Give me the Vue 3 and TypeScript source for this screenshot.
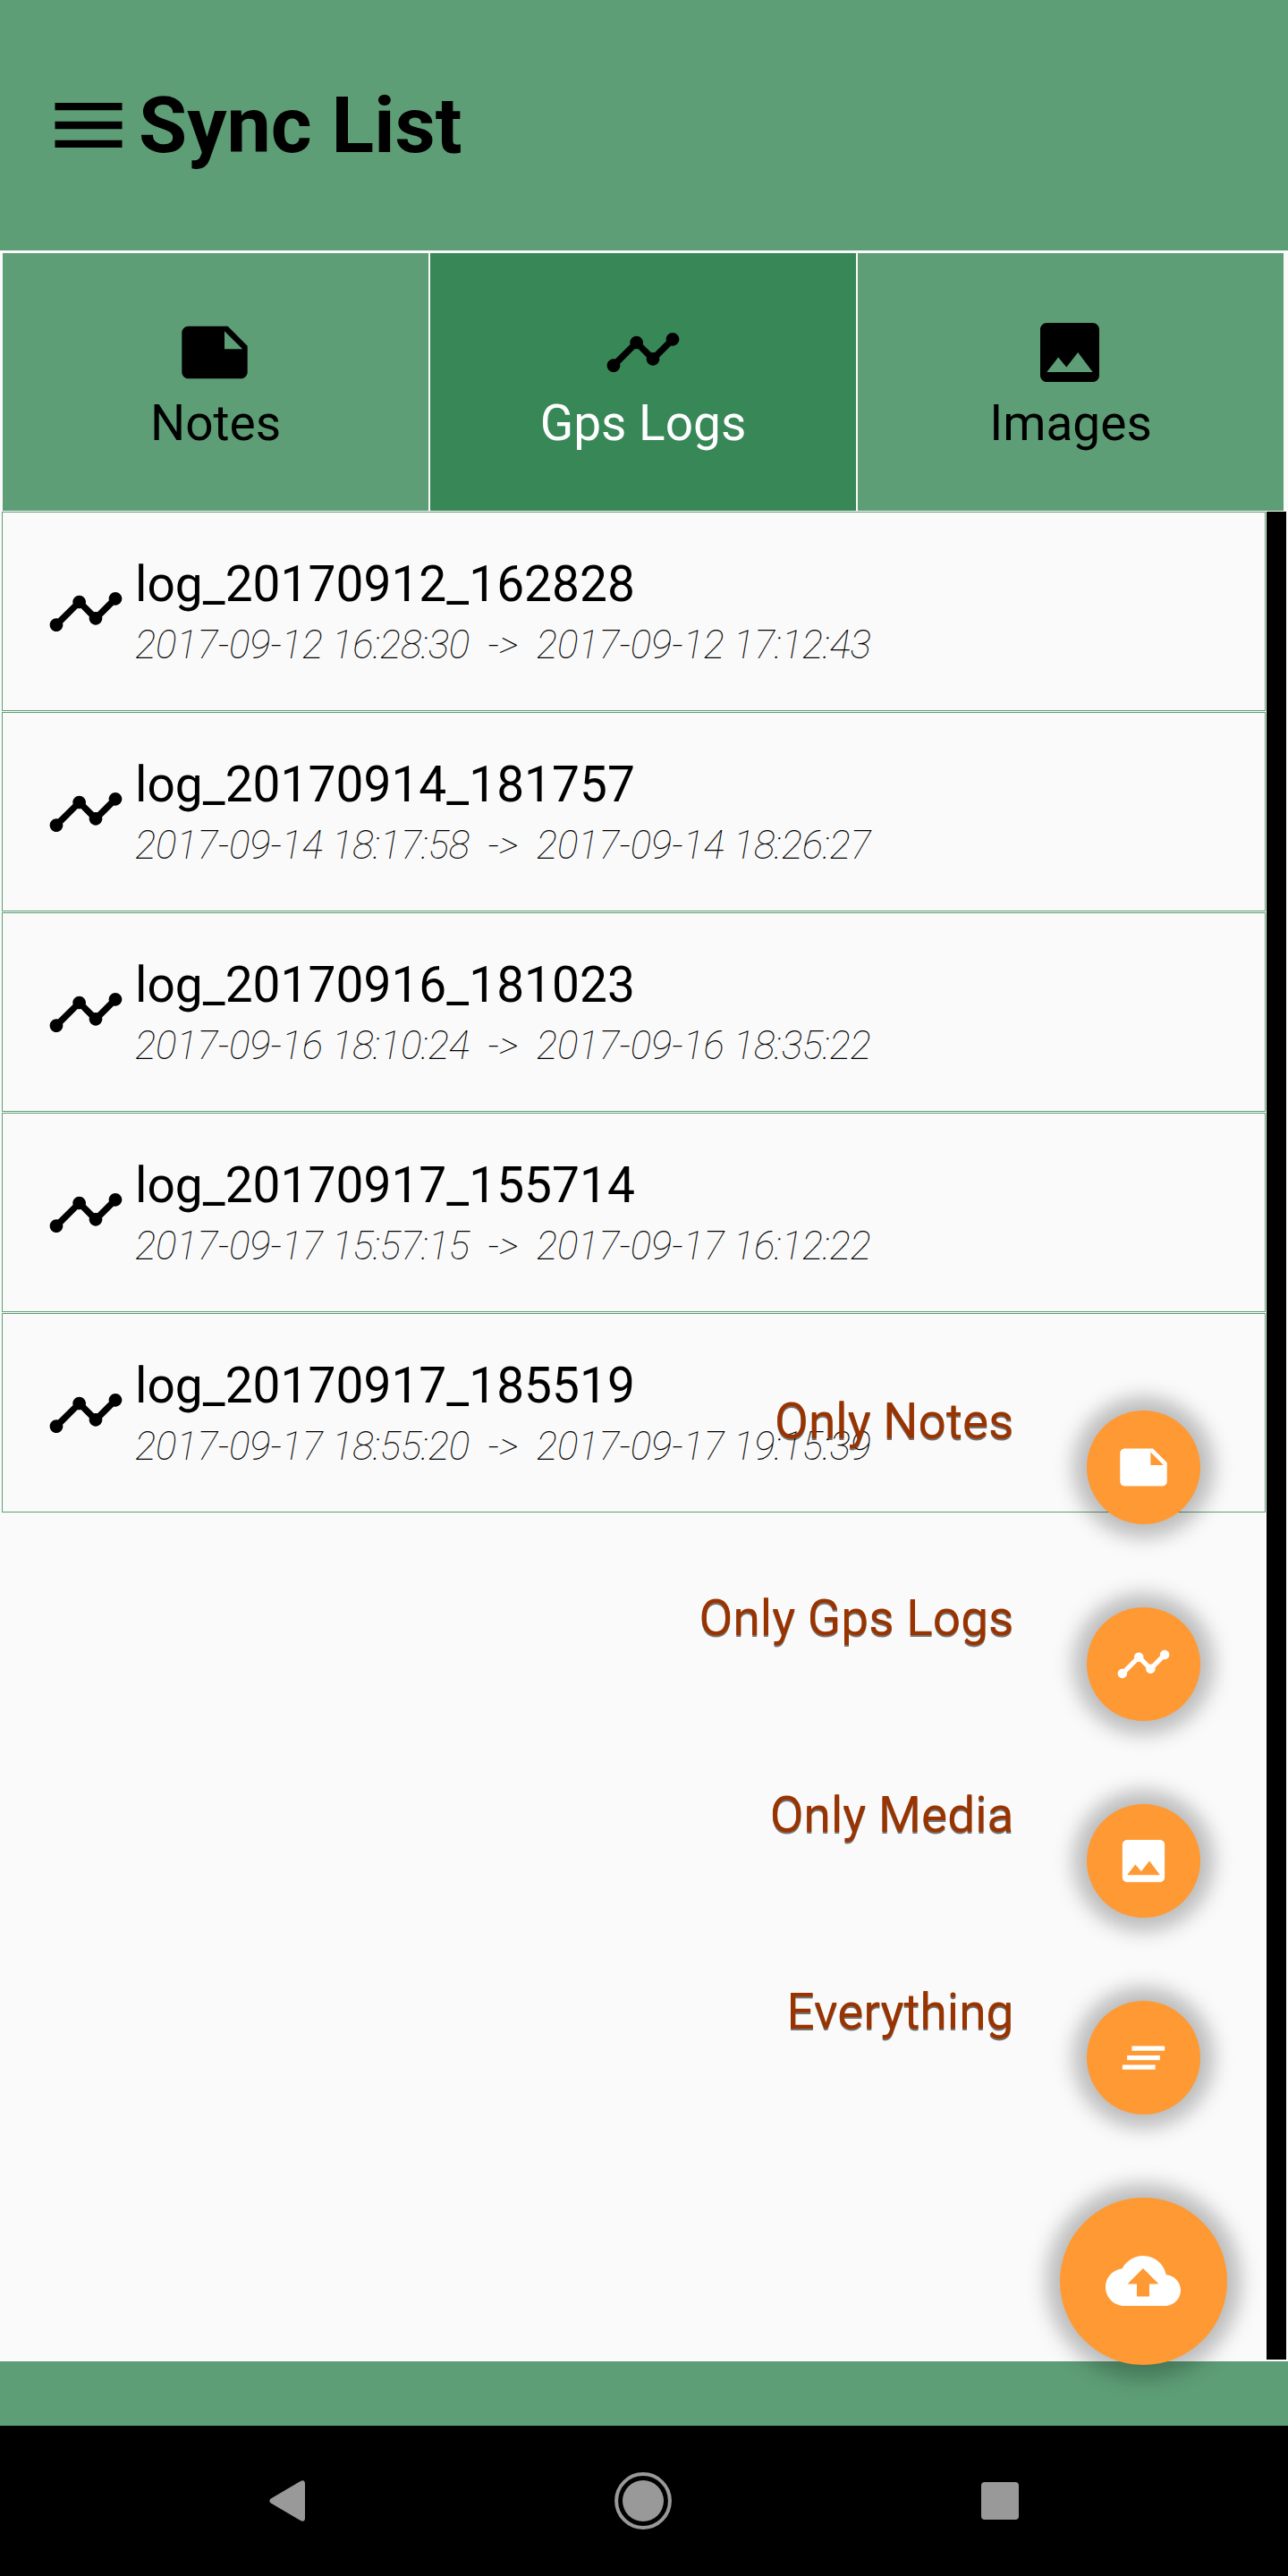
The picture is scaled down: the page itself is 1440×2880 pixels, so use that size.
<script setup lang="ts">
interface Tab {
  label: string
  icon: string
  active: boolean
}

interface LogEntry {
  name: string
  start: string
  end: string
}

interface SyncAction {
  label: string
  icon: string
}

const icons: Record<string, string> = {
  menu: 'M3 18h18v-2H3v2zm0-5h18v-2H3v2zm0-7v2h18V6H3z',
  note: 'M22 10l-6-6H4c-1.1 0-2 .9-2 2v12.01c0 1.1.9 1.99 2 1.99l16-.01c1.1 0 2-.89 2-1.99v-8zm-7-4.5l5.5 5.5H15V5.500z',
  timeline:
    'M23 8c0 1.1-.9 2-2 2-.18 0-.35-.02-.51-.07l-3.56 3.55c.05.16.07.34.07.52 0 1.1-.9 2-2 2s-2-.9-2-2c0-.18.02-.36.07-.52l-2.55-2.55c-.16.05-.34.07-.52.07s-.36-.02-.52-.07l-4.55 4.56c.05.16.07.33.07.51 0 1.1-.9 2-2 2s-2-.9-2-2 .9-2 2-2c.18 0 .35.02.51.07l4.56-4.55C8.02 9.36 8 9.18 8 9c0-1.1.9-2 2-2s2 .9 2 2c0 .18-.02.36-.07.52l2.55 2.55c.16-.05.34-.07.52-.07s.36.02.52.07l3.55-3.56C19.02 8.35 19 8.18 19 8c0-1.100.9-2 2-2s2 .9 2 2z',
  image:
    'M21 19V5c0-1.1-.9-2-2-2H5c-1.1 0-2 .9-2 2v14c0 1.1.9 2 2 2h14c1.1 0 2-.9 2-2zM8.5 13.5l2.5 3.01L14.5 12l4.5 6H5l3.5-4.5z',
  clearAll: 'M5 13h14v-2H5v2zm-2 4h14v-2H3v2zM7 7v2h14V7H7z',
  cloudUpload:
    'M19.35 10.04C18.67 6.59 15.64 4 12 4 9.11 4 6.6 5.64 5.35 8.04 2.34 8.36 0 10.91 0 14c0 3.31 2.69 6 6 6h13c2.76 0 5-2.24 5-5 0-2.64-2.05-4.78-4.65-4.96zM14 13v4h-4v-4H7l5-5 5 5h-3z',
}

const tabs: Tab[] = [
  { label: 'Notes', icon: icons.note, active: false },
  { label: 'Gps Logs', icon: icons.timeline, active: true },
  { label: 'Images', icon: icons.image, active: false },
]

const logs: LogEntry[] = [
  { name: 'log_20170912_162828', start: '2017-09-12 16:28:30', end: '2017-09-12 17:12:43' },
  { name: 'log_20170914_181757', start: '2017-09-14 18:17:58', end: '2017-09-14 18:26:27' },
  { name: 'log_20170916_181023', start: '2017-09-16 18:10:24', end: '2017-09-16 18:35:22' },
  { name: 'log_20170917_155714', start: '2017-09-17 15:57:15', end: '2017-09-17 16:12:22' },
  { name: 'log_20170917_185519', start: '2017-09-17 18:55:20', end: '2017-09-17 19:15:39' },
]

const actions: SyncAction[] = [
  { label: 'Only Notes', icon: icons.note },
  { label: 'Only Gps Logs', icon: icons.timeline },
  { label: 'Only Media', icon: icons.image },
  { label: 'Everything', icon: icons.clearAll },
]
</script>

<template>
  <div class="screen">
    <header class="app-bar">
      <svg class="menu-icon" viewBox="0 0 24 24"><path :d="icons.menu" /></svg>
      <h1 class="title">Sync List</h1>
    </header>

    <nav class="tabs">
      <div v-for="tab in tabs" :key="tab.label" class="tab" :class="{ active: tab.active }">
        <svg class="icon" viewBox="0 0 24 24"><path :d="tab.icon" /></svg>
        <span class="tab-label">{{ tab.label }}</span>
      </div>
    </nav>

    <main class="content">
      <ul class="logs">
        <li v-for="log in logs" :key="log.name" class="log">
          <svg class="icon" viewBox="0 0 24 24"><path :d="icons.timeline" /></svg>
          <div class="log-text">
            <span class="log-name">{{ log.name }}</span>
            <span class="log-range">{{ `${log.start}  ->  ${log.end}` }}</span>
          </div>
        </li>
      </ul>
      <div class="scrollbar"></div>
    </main>

    <div class="bottom-bar"></div>

    <footer class="system-nav">
      <svg class="back" viewBox="0 0 40 46">
        <path d="M34.500 1.200Q40 -1.800 40 4V42Q40 47.800 34.500 44.800L1.800 25.600Q-1.200 23 1.800 20.400Z" />
      </svg>
      <svg class="home" viewBox="0 0 64 64">
        <circle cx="32" cy="32" r="29.900" fill="none" stroke="#999" stroke-width="4" />
        <circle cx="32" cy="32" r="23" />
      </svg>
      <div class="recents"></div>
    </footer>

    <div class="speed-dial">
      <div v-for="action in actions" :key="action.label" class="action">
        <span class="action-label">{{ action.label }}</span>
        <button class="fab mini">
          <svg viewBox="0 0 24 24"><path :d="action.icon" /></svg>
        </button>
      </div>
      <button class="fab main">
        <svg viewBox="0 0 24 24"><path :d="icons.cloudUpload" /></svg>
      </button>
    </div>
  </div>
</template>

<style>
body {
  margin: 0;
}
</style>

<style scoped>
.screen {
  position: relative;
  display: flex;
  flex-direction: column;
  width: 1440px;
  height: 2880px;
  overflow: hidden;
  background: #fafafa;
  color: #000;
  font-family: Roboto, 'Liberation Sans', sans-serif;
}

svg {
  display: block;
  flex: none;
}

.app-bar {
  display: flex;
  align-items: center;
  box-sizing: border-box;
  height: 280px;
  padding-left: 49px;
  background: #5d9e76;
}

.menu-icon {
  width: 100px;
  height: 100px;
  margin-top: -1px;
}

.title {
  margin: 0 0 0 6px;
  font-size: 88px;
  line-height: 104px;
  font-weight: 700;
}

.tabs {
  display: flex;
  gap: 2px;
  height: 288px;
  padding: 3px 5px 1px 3px;
}

.tab {
  display: flex;
  flex: 1;
  flex-direction: column;
  align-items: center;
  box-sizing: border-box;
  padding-top: 67px;
  background: #5d9e76;
}

.tab.active {
  background: #388757;
  color: #fff;
}

.icon {
  width: 88px;
  height: 88px;
  fill: #000;
}

.tab:not(.active) .icon {
  margin-right: 2px;
}

.tab-label {
  font-size: 55px;
  line-height: 70px;
}

.content {
  display: flex;
  height: 2068px;
}

.logs {
  display: flex;
  flex-direction: column;
  gap: 1px;
  width: 1413px;
  margin: 0 1px 0 2px;
  padding: 0;
  list-style: none;
}

.log {
  display: flex;
  align-items: flex-start;
  box-sizing: border-box;
  height: 223px;
  padding: 48px 0 0 49px;
  border: 1px solid #5d9e76;
}

.log .icon {
  margin-top: 19px;
}

.log-text {
  display: flex;
  flex-direction: column;
  margin-left: 11px;
  white-space: pre;
}

.log-name {
  font-size: 55px;
  line-height: 65px;
  letter-spacing: 0.05px;
}

.log-range {
  font-size: 44px;
  line-height: 70px;
  font-style: italic;
  font-weight: 100;
  letter-spacing: -0.230px;
}

.scrollbar {
  width: 22px;
  height: 2066px;
  background: #000;
}

.bottom-bar {
  height: 72px;
  background: #5d9e76;
}

.system-nav {
  display: flex;
  align-items: center;
  height: 168px;
  padding-left: 301px;
  background: #000;
}

.system-nav svg {
  fill: #999;
}

.back {
  width: 40px;
  height: 46px;
}

.home {
  width: 64px;
  height: 64px;
  margin-left: 346px;
}

.recents {
  width: 42.500px;
  height: 42.500px;
  margin-left: 345.700px;
  border-radius: 4px;
  background: #999;
}

.speed-dial {
  position: absolute;
  top: 1577px;
  right: 68px;
  display: flex;
  flex-direction: column;
  align-items: flex-end;
  gap: 93px;
}

.action {
  display: flex;
  align-items: flex-start;
  gap: 81.500px;
  margin-right: 30px;
}

.action-label {
  margin-top: -20px;
  color: #993300;
  font-size: 55px;
  line-height: 65px;
  text-shadow: 0 2px 0 rgba(0, 0, 0, 0.54);
  white-space: nowrap;
}

.fab {
  display: flex;
  align-items: center;
  justify-content: center;
  padding: 0;
  border: 0;
  border-radius: 50%;
  background: #ff9933;
  box-shadow: 0 0 22px 15px rgba(0, 0, 0, 0.25);
}

.fab svg {
  margin: 0 1px 1px 0;
  fill: #fff;
}

.fab.mini {
  width: 127px;
  height: 127px;
}

.fab.mini svg {
  width: 63px;
  height: 63px;
}

.fab.main {
  width: 187px;
  height: 187px;
}

.fab.main svg {
  width: 84px;
  height: 84px;
}
</style>
